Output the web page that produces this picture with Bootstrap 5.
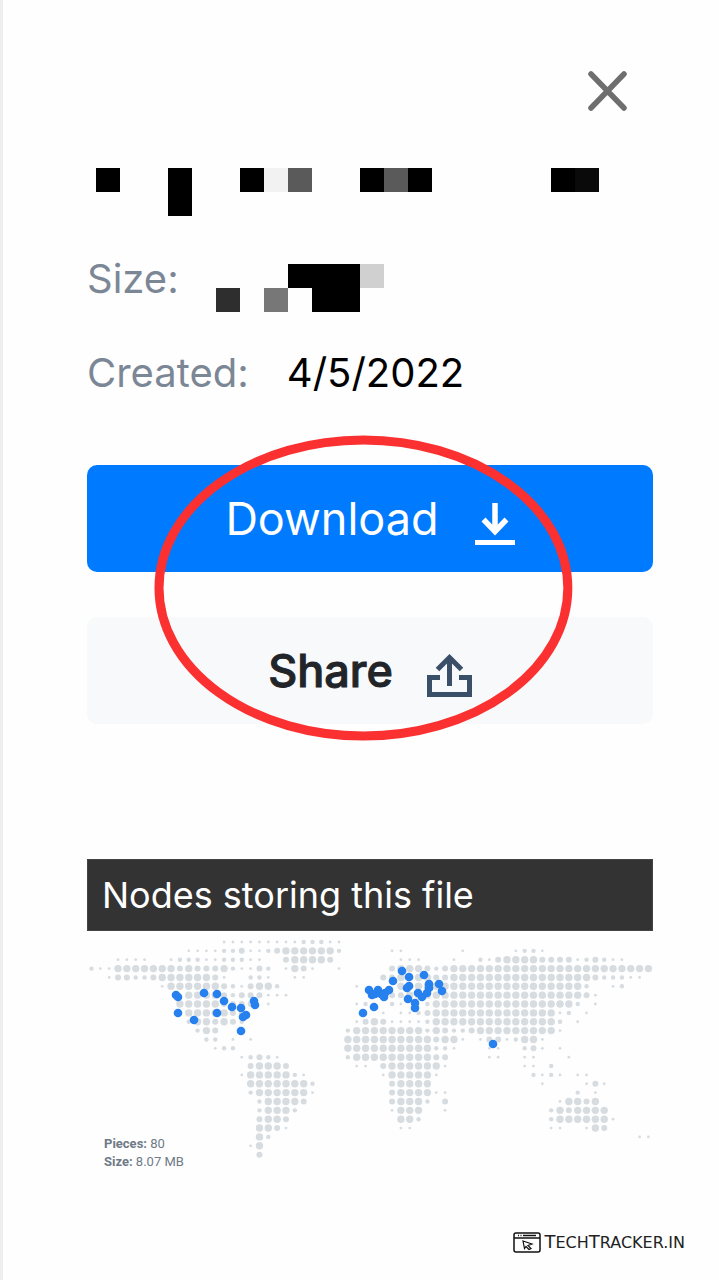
<!DOCTYPE html>
<html lang="en">
<head>
<meta charset="utf-8">
<meta name="viewport" content="width=device-width, initial-scale=1">
<title>File details</title>
<link href="https://cdn.jsdelivr.net/npm/bootstrap@5.3.0/dist/css/bootstrap.min.css" rel="stylesheet">
<style>
  body { font-family: Inter, "Liberation Sans", sans-serif; background: #fefefe; }
  .panel { border-left: 3px solid #eee; min-height: 100vh; padding: 64px 66px 24px 84px; }
  .close-x { width: 54px; height: 54px; margin-right: 18px; }
  .file-name { height: 48px; margin: 50px 0 36px 9px; }
  .meta-row { font-size: 40px; line-height: 54px; margin-bottom: 26px; }
  .meta-label { color: #7c8796; }
  .meta-row .pix { margin-left: 37px; }
  .meta-value { color: #000; margin-left: 38px; }
  .act { height: 107px; border-radius: 10px; font-size: 45px; line-height: 54px; gap: 36px; }
  .act-down, .act-down:hover { background: #007bff; color: #fff; }
  .act-share, .act-share:hover { background: #f8f9fa; color: #212529; font-weight: 500; -webkit-text-stroke: 1px #212529; gap: 34px; }
  .actions { gap: 45px; margin-top: 65px; }
  .ring { position: absolute; left: 11.9%; top: -31px; width: 74%; height: 308px; pointer-events: none; }
  .nodes { margin-top: 135px; }
  .nodes-title { background: #333; color: #fff; font-size: 36px; line-height: 44px; padding: 13px 14px; border: 1px solid #444; }
  .map-note { position: absolute; left: 17px; bottom: 0; font: 13px/18px Roboto, sans-serif; color: #6f7a86; }
  .map-note b { font-weight: 700; }
  .brand { margin-top: 59px; margin-right: -32px; gap: 3px; font: 16px/24px "DejaVu Sans", sans-serif; color: #222; }
  .brand .cap { font-size: 18px; }
</style>
</head>
<body>
<main class="panel">
  <div class="d-flex justify-content-end">
    <button type="button" class="close-x btn p-0 border-0" aria-label="Close">
      <svg class="d-block" width="54" height="54" fill="none" stroke="#6e6e6e" stroke-width="5.5" stroke-linecap="round"><path d="M10 10 43 44M43 10 10 44"/></svg>
    </button>
  </div>

  <div class="file-name">
    <svg class="d-block" width="504" height="48" shape-rendering="crispEdges" aria-label="Hidden file name">
      <path d="M0 0h24v24H0zM72 0h24v48H72zM144 0h24v24h-24zM264 0h24v24h-24zM312 0h24v24h-24zM455 0h24v24h-24z"/>
      <path fill="#f2f2f2" d="M168 0h24v24h-24z"/><path fill="#5a5a5a" d="M192 0h24v24h-24zM288 0h24v24h-24z"/><path fill="#0a0a0a" d="M479 0h24v24h-24z"/>
    </svg>
  </div>

  <div class="meta-row d-flex align-items-start">
    <span class="meta-label">Size:</span>
    <svg class="pix mt-2" width="168" height="60" viewBox="0 -4 168 60" shape-rendering="crispEdges" aria-label="Hidden size">
      <path d="M72 0h72v48H96V24H72z"/><path fill="#2e2e2e" d="M0 24h24v24H0z"/><path fill="#777" d="M48 24h24v24H48z"/><path fill="#d0d0d0" d="M144 0h24v24h-24z"/>
    </svg>
  </div>
  <div class="meta-row d-flex align-items-center">
    <span class="meta-label">Created:</span><span class="meta-value">4/5/2022</span>
  </div>

  <div class="actions position-relative d-grid">
    <button type="button" class="act act-down btn border-0 p-0 d-flex align-items-center justify-content-center">Download
      <svg class="mt-2" width="40" height="44" fill="none" stroke="#fff"><path stroke-width="5.5" d="M20 2v28M8.500 18.500 20 30.500 31.500 18.500"/><path stroke-width="5" d="M0 41.500h40"/></svg>
    </button>
    <button type="button" class="act act-share btn border-0 p-0 d-flex align-items-center justify-content-center">Share
      <svg class="mt-2" width="45" height="46" fill="none" stroke="#3a4f68" stroke-width="5"><path d="M22.500 34V5M10.500 17.500l12-12 12 12M13 25.500H2.500v17h40v-17H32"/></svg>
    </button>
    <svg class="ring" viewBox="0 0 418 308" preserveAspectRatio="none" aria-hidden="true"><ellipse cx="209" cy="154" rx="204" ry="148" fill="none" stroke="#fb3030" stroke-width="9"/></svg>
  </div>

  <section class="nodes">
    <h2 class="nodes-title m-0 fw-normal">Nodes storing this file</h2>
    <div class="position-relative">
      <svg id="map" class="d-block w-100" viewBox="0 0 566 240" role="img" aria-label="World map of storage nodes"></svg>
      <div class="map-note"><b>Pieces:</b> 80<br><b>Size:</b> 8.07 MB</div>
    </div>
  </section>

  <footer class="brand d-flex justify-content-end align-items-center">
    <svg width="28" height="22" fill="none" stroke="#111" stroke-width="1.500"><rect x="1" y="1" width="26" height="19" rx="2"/><path d="M1 6h26M10 3.500h13M5 3.500h1M7.500 3.500h1"/><path d="m10 9 9 3-4 1.500 3 3-2 1-3-3-1.500 2z" stroke-width="1.200"/></svg>
    <span><span class="cap">T</span>ECH<span class="cap">T</span>RACKER.IN</span>
  </footer>
</main>
<script src="https://cdn.jsdelivr.net/npm/bootstrap@5.3.0/dist/js/bootstrap.bundle.min.js"></script>
<script>
  const r4 = n => '4'.repeat(n);
  // Each row lists [first column, dot sizes 1-4]; "." leaves a cell empty.
  const rows = [
    [[15,'11111111122211']],
    [[11,'111122311234444442'],[34,'11'],[42,'1'],[48,'1221']],
    [[3,'1111'],[9,'12221122211'],[22,'344443'],[35,'111'],[41,'1'],[44,'21344443333123211']],
    [[0,'211444444434333421132'],[22,'1431'],[28,'1'],[34,'3444323'+r4(23)]],
    [[2,'13322344444431'],[18,'221'],[23,'11'],[33,'33444433'+r4(16)+'322211']],
    [[8,'14444443213442'],[30,'1'],[35,r4(21)+'2'],[59,'12']],
    [[11,'444432333111'],[34,'3344'+r4(18)+'31']],
    [[10,'444443333.1'],[30,'12'],[34,'21'],[38,'2'+r4(16)+'2'],[57,'1']],
    [[11,'4444433'],[33,'1'],[35,'1123'+r4(14)+'12'],[56,'1']],
    [[11,'2443432'],[30,'134311112'+r4(14)+'2'],[55,'1']],
    [[12,'243'],[29,'2'+r4(8)+'243223'+r4(9)+'1']],
    [[13,'22.1.1'],[29,r4(10)+'3441'],[44,'13312441']],
    [[14,'122'],[29,r4(10)+'221'],[45,'11'],[49,'231.1']],
    [[17,'12321'],[29,'2'+r4(9)+'33'],[45,'11'],[49,'11'],[54,'1']],
    [[18,'34443'],[30,'11.3'+r4(6)+'1'],[49,'11.2']],
    [[17,'14444421'],[33,'1444441'],[50,'2121.11']],
    [[18,'44444442'],[34,'34444'],[51,'1'],[56,'131']],
    [[18,'24444441'],[34,'3444411'],[55,'2.1']],
    [[19,'244443'],[34,'34442.3'],[53,'14434']],
    [[19,'24442'],[34,'1444..1'],[52,'2434444']],
    [[19,'3443'],[35,'442'],[52,'24444441']],
    [[19,'4431'],[35,'11'],[52,'11..143']],
    [[19,'42'],[62,'11']],
    [[18,'14']],
    [[19,'3']]
  ];
  const pins = [[176,995],[178,997],[178,1013],[194,1020],[204,993],[217,994],[217,1013],[224,1001],[232,1007],[241,1008],[254,1001],[255,1005],[246,1015],[243,1017],[241,1031],
    [402,971],[409,977],[393,981],[424,975],[439,984],[442,991],[429,984],[429,988],[409,986],[407,988],[418,993],[422,997],[427,993],[408,999],[415,1003],[415,1008],
    [369,990],[372,995],[378,990],[375,994],[381,994],[384,997],[385,993],[389,990],[374,1007],[363,1013],[493,1044]];
  const size = [0, 1.4, 2.2, 3, 3.7];
  let out = '<g fill="#d7dce0">';
  rows.forEach((row, y) => row.forEach(([start, run]) => [...run].forEach((d, i) => {
    if (d !== '.') out += `<circle cx="${4.5 + 8.84 * (start + i)}" cy="${11 + 8.86 * y}" r="${size[d]}"/>`;
  })));
  out += '</g><g fill="#2680ee">' + pins.map(([x, y]) => `<circle cx="${x - 87}" cy="${y - 931}" r="4.3"/>`).join('') + '</g>';
  document.getElementById('map').innerHTML = out;
</script>
</body>
</html>
